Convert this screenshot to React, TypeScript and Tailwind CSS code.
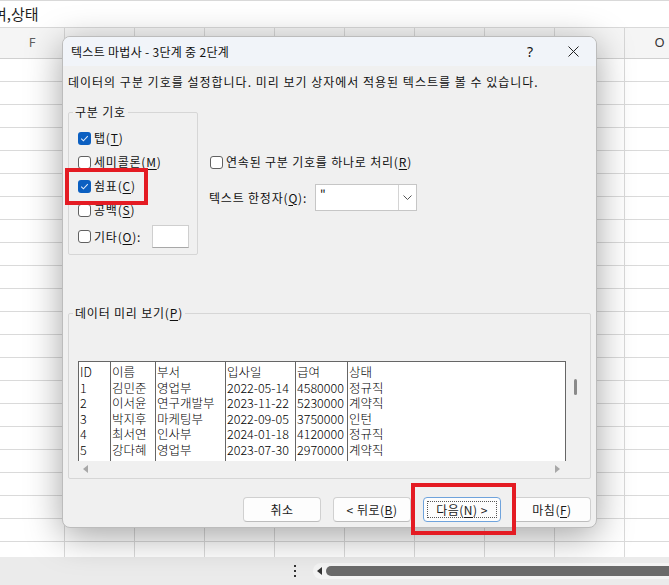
import React from "react";

const U = ({ c }: { c: string }) => <span className="underline underline-offset-[2px] decoration-[1px]">{c}</span>;

function Check({ checked }: { checked?: boolean }) {
  return checked ? (
    <span className="w-[13px] h-[13px] rounded-[3px] bg-[#0b5fc1] flex items-center justify-center shrink-0">
      <svg width="9" height="7" viewBox="0 0 9 7">
        <path d="M1.2 3.7 L3.4 5.8 L7.8 1.2" stroke="#dfeafa" strokeWidth="1.1" fill="none" />
      </svg>
    </span>
  ) : (
    <span className="w-[13px] h-[13px] rounded-[3px] bg-white border border-[#616161] shrink-0" />
  );
}

const rows = [
  ["ID", "이름", "부서", "입사일", "급여", "상태"],
  ["1", "김민준", "영업부", "2022-05-14", "4580000", "정규직"],
  ["2", "이서윤", "연구개발부", "2023-11-22", "5230000", "계약직"],
  ["3", "박지후", "마케팅부", "2022-09-05", "3750000", "인턴"],
  ["4", "최서연", "인사부", "2024-01-18", "4120000", "정규직"],
  ["5", "강다혜", "영업부", "2023-07-30", "2970000", "계약직"],
];

const colW = ["w-[32px]", "w-[45px]", "w-[70px]", "w-[70px]", "w-[52px]", "flex-1"];

function Sheet() {
  const gridRows = Array.from({ length: 22 });
  const cols = Array.from({ length: 10 });
  return (
    <div className="flex flex-col">
      <div className="h-[28px] bg-white border-y border-[#d9d9d9] flex items-center overflow-hidden">
        <span className="ml-[-7px] text-[15px] text-[#1f1f1f] whitespace-nowrap">여,상태</span>
      </div>
      <div className="h-[31px] bg-[#f5f5f5] border-b border-[#d0d0d0] flex">
        {cols.map((_, i) => (
          <div
            key={i}
            className={
              (i === 0 ? "w-[65px] " : "w-[70px] ") +
              "shrink-0 border-r border-[#d6d6d6] flex items-center justify-center text-[13px] text-[#5f5f5f] font-['Noto_Sans',sans-serif]"
            }
          >
            {i === 0 ? "F" : i === 9 ? <span className="text-[#333]">O</span> : ""}
          </div>
        ))}
      </div>
      <div className="h-[498px] overflow-hidden bg-white">
        {gridRows.map((_, r) => (
          <div key={r} className="h-[23px] flex border-b border-[#dadada]">
            {cols.map((_, i) => (
              <div key={i} className={(i === 0 ? "w-[65px] " : "w-[70px] ") + "shrink-0 border-r border-[#dadada]"} />
            ))}
          </div>
        ))}
      </div>
      <div className="h-[28px] bg-[#ebebeb] flex items-center">
        <div className="w-[294px] shrink-0" />
        <div className="flex flex-col gap-[3px]">
          <span className="w-[2px] h-[2px] bg-[#333]" />
          <span className="w-[2px] h-[2px] bg-[#333]" />
          <span className="w-[2px] h-[2px] bg-[#333]" />
        </div>
        <div className="ml-[17px] flex-1 h-[16px] bg-[#f4f4f4] rounded-l-full flex items-center pl-[4px]">
          <svg width="5" height="8" viewBox="0 0 5 8">
            <polygon points="5,0 5,8 0,4" fill="#333" />
          </svg>
          <div className="ml-[4px] flex-1 h-[10px] bg-[#6a6a6a] rounded-l-full" />
        </div>
      </div>
    </div>
  );
}

function Btn({ children, focused }: { children: React.ReactNode; focused?: boolean }) {
  return (
    <div
      className={
        "w-[78px] h-[25px] rounded-[4px] bg-[#fdfdfd] text-[12px] tracking-[0.5px] text-[#1a1a1a] flex items-center justify-center " +
        (focused ? "border border-[#6fa3dc] p-[3px]" : "border border-[#d0d0d0] border-b-[#bdbdbd]")
      }
    >
      {focused ? (
        <span className="w-full h-full border border-dotted border-[#555] flex items-center justify-center">{children}</span>
      ) : (
        children
      )}
    </div>
  );
}

function Dialog() {
  return (
    <div className="absolute left-[62px] top-[36px] w-[535px] h-[492px] rounded-[8px] border border-[#bcbcbc] bg-[#f0f0f0] shadow-[0_8px_36px_rgba(0,0,0,0.36)] overflow-hidden flex flex-col text-[#111] font-['Noto_Sans_CJK_KR','Noto_Sans',sans-serif]">
      <div className="h-[29px] shrink-0 bg-[#f1f4f9] flex items-center pl-[8px] text-[12px]">
        <span className="tracking-[0.3px]">텍스트 마법사 - 3단계 중 2단계</span>
        <span className="ml-auto text-[14px] font-['Noto_Sans',sans-serif]">?</span>
        <span className="ml-[35px] mr-[17px] flex">
          <svg width="11" height="11" viewBox="0 0 11 11">
            <path d="M0.5 0.5 L10.5 10.5 M10.5 0.5 L0.5 10.5" stroke="#222" strokeWidth="1" />
          </svg>
        </span>
      </div>
      <div className="flex-1 px-[5px] pt-[8px] text-[12px] tracking-[0.8px]">
        <div className="leading-[16px] whitespace-nowrap tracking-[1px]">데이터의 구분 기호를 설정합니다. 미리 보기 상자에서 적용된 텍스트를 볼 수 있습니다.</div>
        <div className="flex mt-[14px] items-start">
          <fieldset className="w-[130px] border border-[#d6d6d6] rounded-[2px] px-[4px] pt-[6px] pb-[3px]">
            <legend className="px-[2px] leading-[16px]">구분 기호</legend>
            <div className="flex items-center h-[24px] pl-[5px] gap-[3px]">
              <Check checked />
              <span>
                탭(<U c="T" />)
              </span>
            </div>
            <div className="flex items-center h-[24px] pl-[5px] gap-[3px]">
              <Check />
              <span>
                세미콜론(<U c="M" />)
              </span>
            </div>
            <div className="flex items-center h-[24px] pl-[5px] gap-[3px]">
              <Check checked />
              <span>
                쉼표(<U c="C" />)
              </span>
            </div>
            <div className="flex items-center h-[24px] pl-[5px] gap-[3px]">
              <Check />
              <span>
                공백(<U c="S" />)
              </span>
            </div>
            <div className="flex items-center h-[29px] pl-[5px] gap-[3px]">
              <Check />
              <span>
                기타(<U c="O" />):
              </span>
              <span className="ml-auto mr-[4px] w-[37px] h-[23px] bg-white border border-[#cfcfcf] border-b-[#a8a8a8]" />
            </div>
          </fieldset>
          <div className="ml-[11px] pt-[50px] flex flex-col">
            <div className="flex items-center h-[16px] pl-[1px] gap-[3px] whitespace-nowrap">
              <Check />
              <span>
                연속된 구분 기호를 하나로 처리(<U c="R" />)
              </span>
            </div>
            <div className="mt-[14px] flex items-center h-[27px]">
              <span className="w-[106px] whitespace-nowrap">
                텍스트 한정자(<U c="Q" />):
              </span>
              <div className="w-[102px] h-[27px] bg-white border border-[#c6c6c6] flex">
                <span className="flex-1 pl-[4px] pt-[1px] leading-[16px]">"</span>
                <span className="w-[18px] border-l border-[#d4d4d4] flex items-center justify-center">
                  <svg width="9" height="5" viewBox="0 0 9 5">
                    <path d="M0.5 0.5 L4.5 4.5 L8.5 0.5" stroke="#555" strokeWidth="1" fill="none" />
                  </svg>
                </span>
              </div>
            </div>
          </div>
        </div>
        <fieldset className="mt-[50px] w-[523px] border border-[#d6d6d6] rounded-[2px] px-[4px] pt-[40px] pb-[1px]">
          <legend className="px-[2px] leading-[16px]">
            데이터 미리 보기(<U c="P" />)
          </legend>
          <div className="ml-[5px] w-[505px] h-[116px] flex flex-col">
            <div className="flex h-[100px]">
              <div className="w-[488px] bg-white border-t border-x border-[#666] flex overflow-hidden text-[12.5px] leading-[15.5px] tracking-normal text-black font-light">
                {colW.map((w, ci) => (
                  <div key={ci} className={w + " shrink-0 pl-[1px] pt-[2px] whitespace-nowrap " + (ci < 5 ? "border-r border-[#666]" : "")}>
                    {rows.map((r, ri) => (
                      <div key={ri}>{r[ci]}</div>
                    ))}
                  </div>
                ))}
              </div>
              <div className="w-[17px] pt-[18px] pl-[8px]">
                <div className="w-[3px] h-[16px] rounded-full bg-[#8a8a8a]" />
              </div>
            </div>
            <div className="h-[16px] w-[488px] flex items-center justify-between pl-[5px] pr-[6px]">
              <svg width="5" height="8" viewBox="0 0 5 8">
                <polygon points="5,0 5,8 0,4" fill="#a8a8a8" />
              </svg>
              <svg width="5" height="8" viewBox="0 0 5 8">
                <polygon points="0,0 0,8 5,4" fill="#a8a8a8" />
              </svg>
            </div>
          </div>
        </fieldset>
        <div className="mt-[18px] flex justify-end gap-[12px]">
          <Btn>취소</Btn>
          <Btn>
            &lt; 뒤로(<U c="B" />)
          </Btn>
          <Btn focused>
            다음(<U c="N" />) &gt;
          </Btn>
          <Btn>
            마침(<U c="F" />)
          </Btn>
        </div>
      </div>
    </div>
  );
}

export default function App() {
  return (
    <div className="relative w-[669px] h-[585px] overflow-hidden bg-white font-['Noto_Sans_CJK_KR','Noto_Sans',sans-serif]">
      <Sheet />
      <Dialog />
      <div className="absolute left-[65px] top-[168px] w-[83px] h-[37px] border-[4px] border-[#e41b23]" />
      <div className="absolute left-[411px] top-[483px] w-[105px] h-[52px] border-[4px] border-[#e41b23]" />
    </div>
  );
}
